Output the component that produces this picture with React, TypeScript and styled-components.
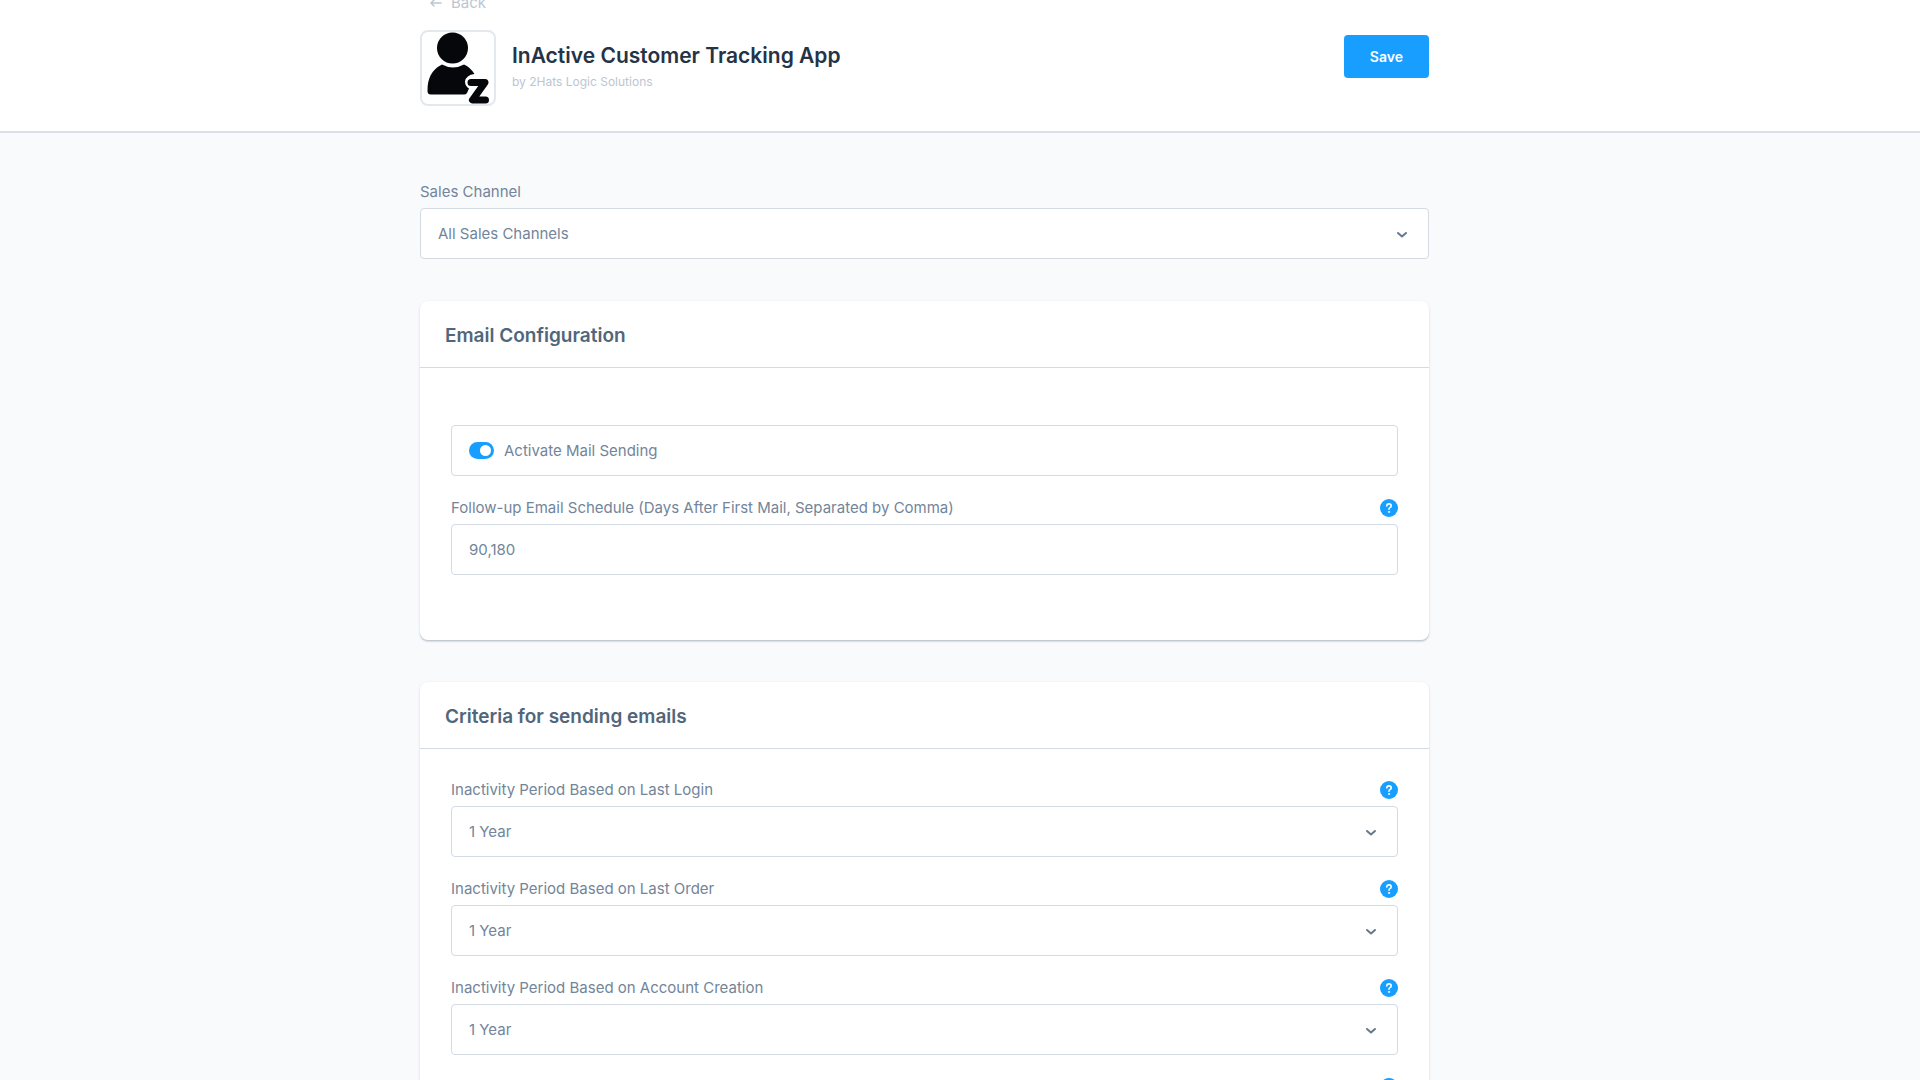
import React, { useState } from "react";
import styled, { createGlobalStyle } from "styled-components";

const GlobalStyle = createGlobalStyle`
  *, *::before, *::after { box-sizing: border-box; }
  body {
    margin: 0;
    background: #f9fafc;
    color: #758ca3;
    font-family: Inter, "Liberation Sans", sans-serif;
    font-size: 15px;
    line-height: 20px;
  }
`;

const colors = {
  primary: "#189eff",
  border: "#d3dae2",
  label: "#72859a",
  heading: "#52667a",
  title: "#243345",
  muted: "#bcc6d1",
};

const Shell = styled.div`
  height: 100vh;
  overflow: hidden;
  display: flex;
  flex-direction: column;
`;

const Header = styled.header`
  flex: none;
  margin-top: -7px;
  padding-right: 71px;
  background: #fff;
  border-bottom: 2px solid #dbe1e9;
`;

const Column = styled.div`
  width: 100%;
  max-width: 1009px;
  margin: 0 auto;
`;

const BackLink = styled.a`
  display: flex;
  align-items: center;
  gap: 8px;
  width: fit-content;
  height: 20px;
  margin-left: 9px;
  color: ${colors.muted};
  text-decoration: none;
`;

const HeaderRow = styled.div`
  display: flex;
  align-items: flex-start;
  padding: 17px 0 25px;
`;

const LogoBox = styled.div`
  flex: none;
  width: 76px;
  height: 76px;
  border: 2px solid #e3e8ed;
  border-radius: 8px;

  svg { display: block; width: 100%; height: 100%; }
`;

const Titles = styled.div`
  flex: 1;
  margin-left: 16px;
  padding-top: 10px;
`;

const Title = styled.h1`
  margin: 0;
  color: ${colors.title};
  font-size: 21px;
  line-height: 32px;
  font-weight: 600;
`;

const Byline = styled.p`
  margin: 0;
  color: ${colors.muted};
  font-size: 12px;
  line-height: 20px;
`;

const SaveButton = styled.button`
  height: 43px;
  margin-top: 5px;
  padding: 0 26px;
  border: 0;
  border-radius: 4px;
  background: ${colors.primary};
  color: #fff;
  font: 600 14px/43px Inter, "Liberation Sans", sans-serif;
`;

const Main = styled.main`
  flex: 1;
  min-height: 0;
  overflow: hidden;
  padding: 49px 71px 0 0;
`;

const Card = styled.section`
  margin-top: 42px;
  border-radius: 8px;
  background: #fff;
  box-shadow: 0 1px 1px rgba(60, 85, 110, 0.14), 0 2px 1px rgba(60, 85, 110, 0.1),
    0 1px 3px rgba(60, 85, 110, 0.14);
`;

const CardTitle = styled.h2`
  margin: 0;
  padding: 23px 25px 19px;
  border-bottom: 1px solid ${colors.border};
  color: ${colors.heading};
  font-size: 19px;
  line-height: 24px;
  font-weight: 600;
`;

const CardBody = styled.div<{ $roomy?: boolean }>`
  display: flex;
  flex-direction: column;
  gap: 22px;
  padding: ${(p) => (p.$roomy ? "57px 31px 65px" : "31px")};
`;

const FieldHead = styled.div`
  display: flex;
  align-items: center;
  justify-content: space-between;
  height: 20px;
  margin-bottom: 6px;
`;

const Label = styled.label`
  color: ${colors.label};
`;

const Help = styled.button`
  display: flex;
  align-items: center;
  justify-content: center;
  width: 18px;
  height: 18px;
  margin-left: auto;
  padding: 0;
  border: 0;
  border-radius: 50%;
  background: ${colors.primary};
  color: #fff;
`;

const Control = styled.div`
  display: grid;
  align-items: center;
  height: 51px;
  border: 1px solid ${colors.border};
  border-radius: 4px;
  background: #fff;

  > * { grid-area: 1 / 1; }
  > svg { justify-self: end; margin-right: 20px; pointer-events: none; }
`;

const Select = styled.select`
  width: 100%;
  height: 100%;
  padding: 0 48px 0 17px;
  border: 0;
  border-radius: 4px;
  background: transparent;
  appearance: none;
  color: ${colors.label};
  font: inherit;
`;

const TextInput = styled.input`
  width: 100%;
  height: 100%;
  padding: 0 17px;
  border: 0;
  border-radius: 4px;
  background: transparent;
  color: ${colors.label};
  font: inherit;
`;

const SwitchLabel = styled.label`
  display: flex;
  align-items: center;
  gap: 10px;
  padding: 0 17px;
  color: ${colors.label};
`;

const Switch = styled.input`
  appearance: none;
  display: flex;
  align-items: center;
  width: 25px;
  height: 17px;
  margin: 0;
  padding: 0 3px;
  border-radius: 9px;
  background: ${colors.border};

  &::before {
    content: "";
    width: 11px;
    height: 11px;
    border-radius: 50%;
    background: #fff;
  }
  &:checked { justify-content: flex-end; background: ${colors.primary}; }
`;

const Logo = () => (
  <svg viewBox="0 0 72 72" role="img" aria-label="InActive Customer Tracking App">
    <g fill="#05070b">
      <circle cx="30.500" cy="16" r="15.500" />
      <path d="M20 32.500 Q31 38.500 42 32.500 Q48 35 52.500 42 Q44 43 43 49.500 Q43 54 47 56.500 L45 61 Q44 62.500 42 62.500 H9 Q5.500 62.500 5.500 59 Q5 40 20 32.500Z" />
    </g>
    <path d="M49 50.500 H63 L50.500 68 H63.500" fill="none" stroke="#05070b" strokeWidth="7" strokeLinecap="round" strokeLinejoin="round" />
  </svg>
);

const Chevron = () => (
  <svg width="12" height="12" viewBox="0 0 12 12" fill="none" stroke="#66788a" strokeWidth="2" strokeLinecap="round" strokeLinejoin="round">
    <path d="M2 5 L6 8.500 L10 5" />
  </svg>
);

const HelpButton = () => (
  <Help type="button" aria-label="Help">
    <svg width="18" height="18" viewBox="0 0 18 18" fill="none" stroke="currentColor" strokeLinecap="round" strokeLinejoin="round">
      <path d="M6.800 7 Q6.800 4.900 9 4.900 Q11.200 4.900 11.200 6.900 Q11.200 8 9.900 8.600 Q9 9.100 9 10.200" strokeWidth="1.600" />
      <circle cx="9" cy="12.900" r="0.600" fill="currentColor" strokeWidth="0.800" />
    </svg>
  </Help>
);

type FieldProps = { id: string; label?: string; help?: boolean; children: React.ReactNode };

const Field = ({ id, label, help, children }: FieldProps) => (
  <div>
    <FieldHead>
      {label && <Label htmlFor={id}>{label}</Label>}
      {help && <HelpButton />}
    </FieldHead>
    <Control>{children}</Control>
  </div>
);

const periods = [
  { id: "last-login", label: "Inactivity Period Based on Last Login" },
  { id: "last-order", label: "Inactivity Period Based on Last Order" },
  { id: "account-creation", label: "Inactivity Period Based on Account Creation" },
  { id: "other-period" },
];

export default function App() {
  const [active, setActive] = useState(true);
  const [schedule, setSchedule] = useState("90,180");

  return (
    <Shell>
      <GlobalStyle />
      <Header>
        <Column>
          <BackLink href="#">
            <svg width="14" height="12" viewBox="0 0 14 12" fill="none" stroke="currentColor" strokeWidth="1.500" strokeLinecap="round" strokeLinejoin="round">
              <path d="M12 6 H2 M5 3 L2 6 L5 9" />
            </svg>
            Back
          </BackLink>
          <HeaderRow>
            <LogoBox><Logo /></LogoBox>
            <Titles>
              <Title>InActive Customer Tracking App</Title>
              <Byline>by 2Hats Logic Solutions</Byline>
            </Titles>
            <SaveButton type="button">Save</SaveButton>
          </HeaderRow>
        </Column>
      </Header>
      <Main>
        <Column>
          <Field id="sales-channel" label="Sales Channel">
            <Select id="sales-channel"><option>All Sales Channels</option></Select>
            <Chevron />
          </Field>
          <Card>
            <CardTitle>Email Configuration</CardTitle>
            <CardBody $roomy>
              <Control>
                <SwitchLabel>
                  <Switch type="checkbox" role="switch" checked={active} onChange={(e) => setActive(e.target.checked)} />
                  Activate Mail Sending
                </SwitchLabel>
              </Control>
              <Field id="schedule" label="Follow-up Email Schedule (Days After First Mail, Separated by Comma)" help>
                <TextInput id="schedule" type="text" value={schedule} onChange={(e) => setSchedule(e.target.value)} />
              </Field>
            </CardBody>
          </Card>
          <Card>
            <CardTitle>Criteria for sending emails</CardTitle>
            <CardBody>
              {periods.map((p) => (
                <Field key={p.id} id={p.id} label={p.label} help>
                  <Select id={p.id} aria-label={p.label ? undefined : "Inactivity Period"}><option>1 Year</option></Select>
                  <Chevron />
                </Field>
              ))}
            </CardBody>
          </Card>
        </Column>
      </Main>
    </Shell>
  );
}
